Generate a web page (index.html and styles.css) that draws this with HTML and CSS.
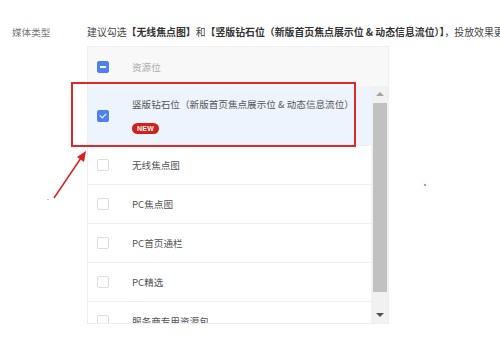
FILE: index.html
```html
<!DOCTYPE html>
<html>

<head>
    <title>媒体类型</title>
    <link rel="stylesheet" href="styles.css">
</head>

<body>
    <div class="form-row">
        <div class="label">媒体类型</div>
        <div class="field">
            <p class="tip">建议勾选<b>【无线焦点图】</b>和<b>【竖版钻石位（新版首页焦点展示位 &amp; 动态信息流位）】</b>，投放效果更好</p>

            <div class="table">
                <div class="table-head">
                    <span class="check indeterminate"></span>
                    <span class="head-title">资源位</span>
                </div>
                <div class="table-body">
                    <ul class="rows">
                        <li class="row selected">
                            <span class="check checked"></span>
                            <div class="cell">
                                <div class="name">竖版钻石位（新版首页焦点展示位 &amp; 动态信息流位）</div>
                                <span class="badge">NEW</span>
                            </div>
                        </li>
                        <li class="row"><span class="check"></span><div class="cell"><div class="name">无线焦点图</div></div></li>
                        <li class="row"><span class="check"></span><div class="cell"><div class="name">PC焦点图</div></div></li>
                        <li class="row"><span class="check"></span><div class="cell"><div class="name">PC首页通栏</div></div></li>
                        <li class="row"><span class="check"></span><div class="cell"><div class="name">PC精选</div></div></li>
                        <li class="row"><span class="check"></span><div class="cell"><div class="name">服务商专用资源包</div></div></li>
                    </ul>
                    <div class="scrollbar">
                        <div class="scroll-btn"><span class="tri-up"></span></div>
                        <div class="scroll-track"><div class="thumb"></div></div>
                        <div class="scroll-btn"><span class="tri-down"></span></div>
                    </div>
                </div>
            </div>
        </div>
    </div>

    <!-- annotation drawn over the screenshot -->
    <div class="highlight"></div>
    <svg class="annotation" width="500" height="359" viewBox="0 0 500 359">
        <line x1="54" y1="198" x2="81" y2="158" stroke="#e01e1e" stroke-width="1.5" />
        <polygon points="86,151 77,157 84,162" fill="#e01e1e" />
        <rect x="47" y="199" width="2" height="1" fill="#e8b0a8" />
        <rect x="424" y="184" width="2" height="2" fill="#d89090" />
    </svg>
</body>

</html>
```

FILE: styles.css
```css
body {
    margin: 0;
    padding: 0;
    background-color: white;
    font-family: "Noto Sans CJK SC", "Liberation Sans", sans-serif;
    font-size: 9.6px;
    color: #555;
}

.form-row {
    display: flex;
    padding-top: 25px;
}

.label {
    width: 75px;
    padding-left: 12px;
    line-height: 14px;
    color: #777;
}

.field {
    width: 302px;
}

.tip {
    margin: 0 0 7px 0;
    line-height: 14px;
    font-size: 9.9px;
    white-space: nowrap;
    color: #444;
}

.tip b {
    color: #333;
}

.table {
    border: 1px solid #eee;
    border-top-color: #f0f0f0;
    height: 276px;
    overflow: hidden;
}

.table-head {
    display: flex;
    align-items: center;
    height: 39px;
    padding-left: 9px;
    background-color: #f8f8f8;
}

.head-title {
    margin-left: 23px;
    color: #aaa;
}

.check {
    display: inline-block;
    flex: none;
    width: 10px;
    height: 10px;
    border: 1px solid #dcdcdc;
    border-radius: 2px;
    background-color: white;
    position: relative;
}

.check.indeterminate,
.check.checked {
    background-color: #4d7ff5;
    border-color: #4d7ff5;
}

.check.indeterminate::after {
    content: "";
    position: absolute;
    left: 2px;
    top: 4px;
    width: 6px;
    height: 2px;
    background: white;
}

.check.checked::after {
    content: "";
    position: absolute;
    left: 3px;
    top: 1px;
    width: 3px;
    height: 5px;
    border: solid white;
    border-width: 0 1.5px 1.5px 0;
    transform: rotate(45deg);
}

.table-body {
    display: flex;
    height: 237px;
}

.rows {
    flex: 1;
    list-style: none;
    margin: 0;
    padding: 0;
    overflow: hidden;
}

.row {
    display: flex;
    align-items: center;
    height: 38px;
    padding-left: 9px;
    border-bottom: 1px solid #eee;
    flex: none;
}

.row.selected {
    height: 59px;
    background-color: #eef4fe;
}

.cell {
    margin-left: 23px;
}

.name {
    line-height: 14px;
    color: #555;
    white-space: nowrap;
}

.badge {
    display: inline-block;
    margin-top: 12px;
    width: 27px;
    height: 11px;
    line-height: 11px;
    border-radius: 6px;
    background-color: #d2201b;
    color: white;
    font-family: "Liberation Sans", sans-serif;
    font-weight: bold;
    font-size: 7px;
    text-align: center;
    letter-spacing: 0.3px;
    vertical-align: top;
}

.scrollbar {
    width: 17px;
    display: flex;
    flex-direction: column;
    background-color: #f1f1f1;
}

.scroll-btn {
    height: 17px;
    display: flex;
    align-items: center;
    justify-content: center;
}

.scroll-track {
    flex: 1;
    padding: 0 1px 15px 2px;
}

.thumb {
    height: 189px;
    background-color: #c1c1c1;
}

.tri-up {
    width: 0;
    height: 0;
    border-left: 4px solid transparent;
    border-right: 4px solid transparent;
    border-bottom: 4px solid #a3a3a3;
}

.tri-down {
    width: 0;
    height: 0;
    border-left: 4px solid transparent;
    border-right: 4px solid transparent;
    border-top: 4px solid #505050;
}

.highlight {
    position: absolute;
    left: 71px;
    top: 82px;
    width: 281px;
    height: 61px;
    border: 2px solid #e02828;
}

.annotation {
    position: absolute;
    left: 0;
    top: 0;
    pointer-events: none;
}
```
